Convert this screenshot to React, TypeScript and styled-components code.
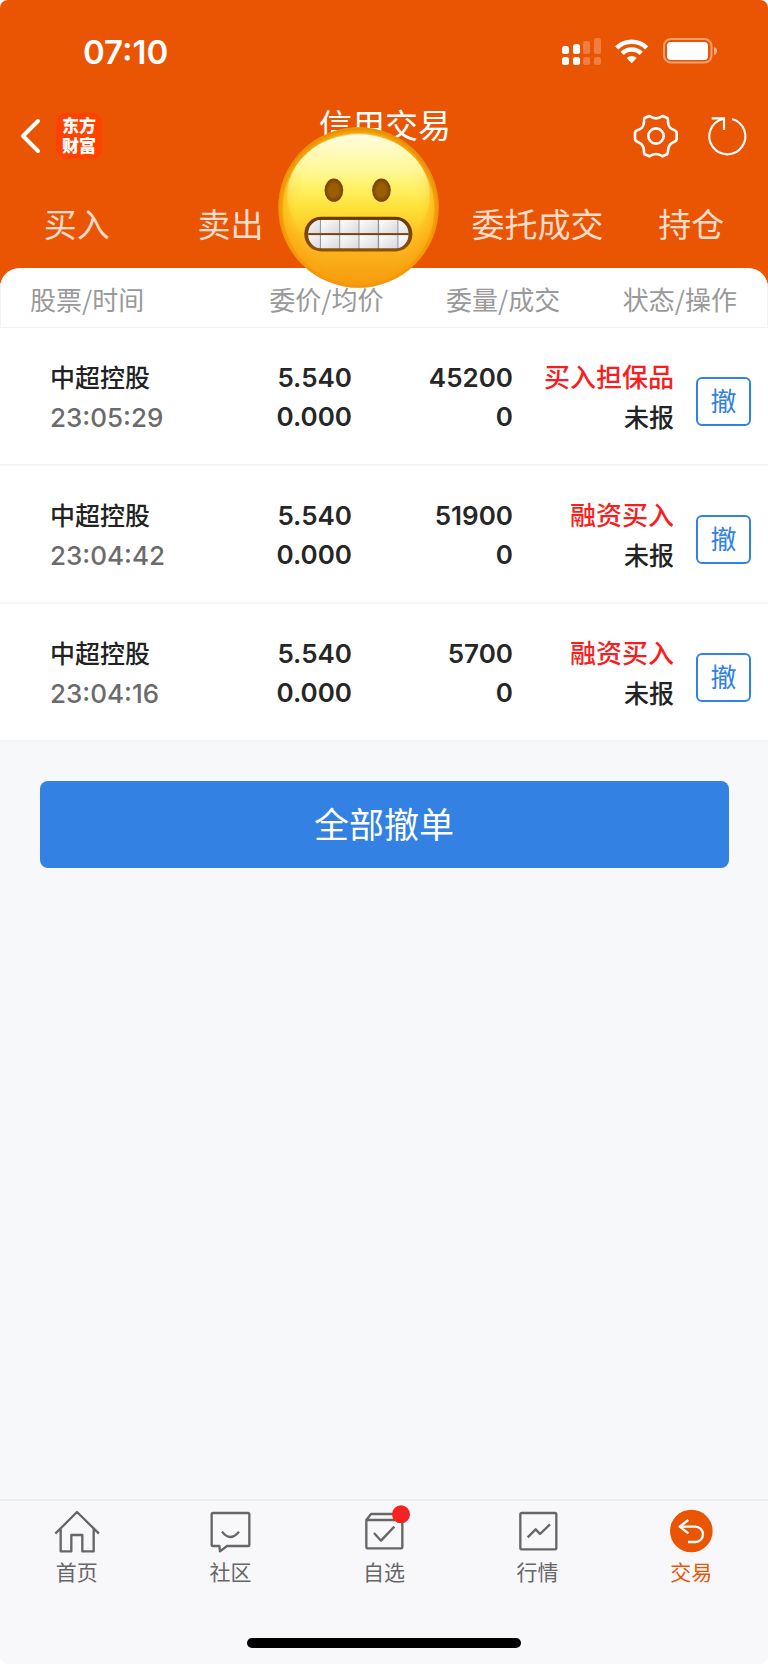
import React from 'react';
import styled, { createGlobalStyle } from 'styled-components';

const GlobalStyle = createGlobalStyle`
  *, *::before, *::after { box-sizing: border-box; }
  body {
    margin: 0;
    background: #fff;
    font-family: Inter, "Noto Sans CJK SC", sans-serif;
    color: #222;
  }
  button { font-family: inherit; padding: 0; cursor: pointer; }
  a { color: inherit; text-decoration: none; }
`;

const Screen = styled.div`
  position: relative;
  display: flex;
  flex-direction: column;
  min-height: 100vh;
  border-radius: 8px;
  overflow: hidden;
  background: #f7f8fa;
`;

const Top = styled.header`
  background: #ea5504;
  color: #fff;
  padding-bottom: 20px;
  margin-bottom: -20px;
`;

const StatusBar = styled.div`
  display: flex;
  align-items: center;
  justify-content: space-between;
  height: 102px;
  padding: 0 50px 0 83px;
`;

const Clock = styled.time`
  padding-top: 2px;
  font-size: 33px;
  font-weight: 600;
  line-height: 40px;
`;

const TitleBar = styled.div`
  display: grid;
  grid-template-columns: 1fr auto 1fr;
  align-items: center;
  height: 68px;
  padding: 0 16px 0 18px;
`;

const TitleSide = styled.div<{ $end?: boolean }>`
  display: flex;
  align-items: center;
  justify-content: ${(p) => (p.$end ? 'flex-end' : 'flex-start')};
  gap: ${(p) => (p.$end ? '24px' : '12px')};
`;

const Title = styled.h1`
  margin: 0;
  align-self: start;
  font-size: 33px;
  font-weight: 400;
  line-height: 48px;
`;

const IconButton = styled.button`
  display: flex;
  border: 0;
  background: none;
  color: inherit;
`;

const Logo = styled.span`
  width: 46px;
  height: 46px;
  padding: 3px 0;
  border-radius: 9px;
  background: #ff4200;
  text-align: center;
  font-size: 17px;
  font-weight: 900;
  line-height: 20px;
`;

const Tabs = styled.nav`
  display: grid;
  grid-template-columns: repeat(5, 1fr);
  height: 98px;
`;

const Tab = styled.a`
  padding-top: 35px;
  text-align: center;
  white-space: nowrap;
  font-size: 33px;
  line-height: 40px;
  color: #ffdccb;
`;

const Orders = styled.table`
  display: block;
  background: #fff;
  border-radius: 20px 20px 0 0;
`;

const HeadRow = styled.tr`
  display: grid;
  grid-template-columns: repeat(4, 1fr);
  height: 60px;
  padding: 4px 30px 0 29px;
  border: 1px solid #f2f2f4;
  border-top: 0;
  border-radius: 20px 20px 0 0;
`;

const HeadCell = styled.th<{ $start?: boolean }>`
  padding: 0;
  text-align: ${(p) => (p.$start ? 'left' : 'right')};
  font-family: "Noto Sans CJK SC", sans-serif;
  font-size: 26px;
  font-weight: 400;
  line-height: 54px;
  color: #999;
`;

const Block = styled.thead`
  display: block;
`;

const OrderRow = styled.tr`
  display: grid;
  grid-template-columns: 141fr 161fr 161fr 161fr 77fr;
  height: 138px;
  padding: 30px 17px 0 50px;
  border-bottom: 2px solid #f5f5f7;
`;

const Cell = styled.td<{ $start?: boolean }>`
  display: flex;
  flex-direction: column;
  align-items: ${(p) => (p.$start ? 'flex-start' : 'flex-end')};
  padding: 0;
  white-space: nowrap;
`;

const Line = styled.span<{ $tone?: 'muted' | 'red'; $name?: boolean }>`
  font-size: ${(p) => (p.$name ? '25px' : '26px')};
  font-weight: ${(p) => (p.$tone === 'muted' ? 500 : 600)};
  line-height: 39px;
  color: ${(p) => (p.$tone === 'muted' ? '#6b6b6b' : '#262626')};
`;

const Word = styled(Line)`
  font-weight: 500;
  line-height: 40px;
  color: ${(p) => (p.$tone === 'red' ? '#f91d1d' : '#222')};
`;

const CancelButton = styled.button`
  width: 55px;
  height: 49px;
  margin-top: 19px;
  border: 2px solid #3182e6;
  border-radius: 6px;
  background: #fff;
  color: #2f7fe4;
  font-size: 26px;
  line-height: 44px;
`;

const Main = styled.main`
  flex: 1;
`;

const CancelAll = styled.button`
  display: block;
  width: calc(100% - 79px);
  height: 87px;
  margin: 39px auto 0;
  border: 0;
  border-radius: 8px;
  background: #3281e3;
  color: #fff;
  font-size: 35px;
  line-height: 86px;
`;

const Footer = styled.footer`
  border-top: 2px solid #ebecee;
  background: #f8f8fb;
  padding-bottom: 16px;
`;

const NavBar = styled.nav`
  display: grid;
  grid-template-columns: repeat(5, 1fr);
  padding-top: 7px;
`;

const NavItem = styled.a<{ $active?: boolean }>`
  display: flex;
  flex-direction: column;
  align-items: center;
  font-size: 21px;
  line-height: 34px;
  color: ${(p) => (p.$active ? '#ea5504' : '#666')};
`;

const HomeIndicator = styled.div`
  width: 274px;
  height: 10px;
  margin: 48px auto 0;
  border-radius: 5px;
  background: #000;
`;

const Sticker = styled.svg`
  position: absolute;
  top: 127px;
  left: calc(50% - 106px);
  width: 161px;
  height: 161px;
`;

const NavSvg = styled.svg`
  width: 48px;
  height: 48px;
  overflow: visible;
  fill: none;
  stroke: currentColor;
  stroke-width: 7;
  stroke-linejoin: round;
`;

const BarSvg = styled.svg`
  width: 48px;
  height: 48px;
  fill: none;
  stroke: currentColor;
`;

const StatusIcons = () => (
  <svg width="156" height="30" viewBox="0 0 156 30" fill="#fff" aria-hidden="true">
    <rect x="0" y="10" width="7" height="8" rx="2.5" />
    <rect x="0" y="21" width="7" height="8" rx="2.5" />
    <rect x="11" y="8" width="7" height="10" rx="2.5" />
    <rect x="11" y="21" width="7" height="8" rx="2.5" />
    <g opacity=".24">
      <rect x="21" y="5" width="7" height="13" rx="2.5" />
      <rect x="21" y="21" width="7" height="8" rx="2.5" />
      <rect x="32" y="2" width="7" height="16" rx="2.5" />
      <rect x="32" y="21" width="7" height="8" rx="2.5" />
    </g>
    <g fill="none" stroke="#fff" strokeWidth="4.6">
      <path d="M54.7 11.8a21.5 21.5 0 0 1 30 0" />
      <path d="M60.2 17.4a13.6 13.6 0 0 1 19 0" />
    </g>
    <path d="M69.7 27.2l-5-5.2a7.4 7.4 0 0 1 10 0z" />
    <rect x="102" y="3" width="47.5" height="23.5" rx="7" fill="none" stroke="#fff" strokeWidth="2" opacity=".45" />
    <rect x="105" y="6" width="41" height="18" rx="4" />
    <path d="M152 11q3 1 3 4t-3 4z" opacity=".55" />
  </svg>
);

const Grimace = () => (
  <Sticker viewBox="55 80 482 484" role="img" aria-label="grimacing face">
    <defs>
      <linearGradient id="face" x1="0" y1="0" x2="0" y2="1">
        <stop offset="0" stopColor="#fff79a" />
        <stop offset=".3" stopColor="#fff45c" />
        <stop offset=".5" stopColor="#fee034" />
        <stop offset=".72" stopColor="#fdbb22" />
        <stop offset="1" stopColor="#f79d10" />
      </linearGradient>
      <radialGradient id="rim" cx=".5" cy=".52" r=".51">
        <stop offset=".76" stopColor="#fba60c" stopOpacity="0" />
        <stop offset=".93" stopColor="#f99c08" stopOpacity=".5" />
        <stop offset="1" stopColor="#dc7a05" stopOpacity=".7" />
      </radialGradient>
      <linearGradient id="edge" x1="0" y1="0" x2="0" y2="1">
        <stop offset="0" stopColor="#ffc50c" />
        <stop offset=".5" stopColor="#faa40e" />
        <stop offset="1" stopColor="#ee920c" />
      </linearGradient>
      <linearGradient id="gloss" x1="0" y1="0" x2="0" y2="1">
        <stop offset="0" stopColor="#fffde0" />
        <stop offset=".3" stopColor="#fffa9c" stopOpacity=".9" />
        <stop offset=".6" stopColor="#ffee48" stopOpacity=".35" />
        <stop offset=".9" stopColor="#ffd020" stopOpacity="0" />
      </linearGradient>
      <linearGradient id="tooth" x1="0" y1="0" x2="1" y2="1">
        <stop offset="0" stopColor="#fff" />
        <stop offset="1" stopColor="#d8d8de" />
      </linearGradient>
      <linearGradient id="lip" x1="0" y1="0" x2="0" y2="1">
        <stop offset="0" stopColor="#6d3602" />
        <stop offset="1" stopColor="#8f5206" />
      </linearGradient>
      <radialGradient id="eye">
        <stop offset=".5" stopColor="#9a5e04" />
        <stop offset="1" stopColor="#784004" />
      </radialGradient>
      <clipPath id="mouth">
        <rect x="145" y="359" width="301" height="86" rx="40" />
      </clipPath>
    </defs>
    <circle cx="296" cy="322" r="241" fill="url(#edge)" />
    <circle cx="296" cy="326" r="228" fill="url(#face)" opacity=".9" />
    <circle cx="296" cy="322" r="241" fill="url(#rim)" />
    <ellipse cx="296" cy="285" rx="214" ry="183" fill="url(#gloss)" />
    <ellipse cx="222" cy="270" rx="28" ry="35" fill="url(#eye)" />
    <ellipse cx="365" cy="270" rx="28" ry="35" fill="url(#eye)" />
    <rect x="133" y="350" width="325" height="104" rx="51" fill="url(#lip)" />
    <g clipPath="url(#mouth)">
      <rect x="145" y="359" width="301" height="86" fill="#87929b" />
      {[125, 183, 241, 299, 358, 416].map((x) => (
        <React.Fragment key={x}>
          <rect x={x} y="359" width="55" height="41" fill="url(#tooth)" />
          <rect x={x} y="404" width="55" height="41" fill="url(#tooth)" />
        </React.Fragment>
      ))}
      <rect x="145" y="399" width="301" height="6" fill="#7a450a" />
    </g>
  </Sticker>
);

const orders = [
  { name: '中超控股', time: '23:05:29', price: '5.540', avg: '0.000', qty: '45200', filled: '0', kind: '买入担保品', state: '未报' },
  { name: '中超控股', time: '23:04:42', price: '5.540', avg: '0.000', qty: '51900', filled: '0', kind: '融资买入', state: '未报' },
  { name: '中超控股', time: '23:04:16', price: '5.540', avg: '0.000', qty: '5700', filled: '0', kind: '融资买入', state: '未报' },
];

const navItems = [
  {
    label: '首页',
    icon: (
      <path d="M7 77 72 12l66 65M23 64v66h32V81h33v49h34V64" />
    ),
  },
  {
    label: '社区',
    icon: (
      <>
        <path d="M21 15h105q4 0 4 4v91q0 4-4 4H63l-21 16-2-16H21q-4 0-4-4V19q0-4 4-4z" />
        <path d="M48 71q24 32 51 0" />
      </>
    ),
  },
  {
    label: '自选',
    icon: (
      <>
        <path d="M19 36 33 18h80l14 18v81q0 4-4 4H23q-4 0-4-4zh108" />
        <path d="m42 75 21 23 40-42" />
        <circle cx="123" cy="19" r="27" fill="#f52222" stroke="none" />
      </>
    ),
  },
  {
    label: '行情',
    icon: (
      <>
        <rect x="19" y="15" width="108" height="109" rx="4" />
        <path d="m41 88 24-24 13 14 30-29" />
      </>
    ),
  },
  {
    label: '交易',
    active: true,
    icon: (
      <>
        <circle cx="73" cy="69" r="64" fill="#ea5504" stroke="none" />
        <path stroke="#fff" d="M64 36 38 56l26 20M38 56h47a23 23 0 0 1 0 46H63" />
      </>
    ),
  },
];

export default function App() {
  return (
    <>
      <GlobalStyle />
      <Screen>
        <Top>
          <StatusBar>
            <Clock>07:10</Clock>
            <StatusIcons />
          </StatusBar>
          <TitleBar>
            <TitleSide>
              <IconButton aria-label="返回">
                <svg width="26" height="40" viewBox="0 0 26 40" fill="none" stroke="#fff" strokeWidth="4" strokeLinecap="round" strokeLinejoin="round">
                  <path d="M20 5 5 20l15 15" />
                </svg>
              </IconButton>
              <Logo>东方<br />财富</Logo>
            </TitleSide>
            <Title>信用交易</Title>
            <TitleSide $end>
              <IconButton aria-label="设置">
                <BarSvg viewBox="10 12 144 144" strokeWidth="8" strokeLinejoin="round">
                  <path d="M62 24Q72 31 82 31T102 24L116 30Q119 34 118 42C118 54 127 64 138 67Q144 70 144 74V94Q143 99 137 101C126 105 118 115 118 128Q118 135 115 139L102 145Q92 138 82 138T62 145L48 139Q45 135 46 128C46 115 37 105 26 101Q20 99 19 94V74Q20 69 26 67C37 64 46 54 46 42Q45 34 48 30Z" />
                  <circle cx="82" cy="84" r="23" />
                </BarSvg>
              </IconButton>
              <IconButton aria-label="刷新">
                <BarSvg viewBox="225 12 144 144" strokeWidth="6.5">
                  <path d="M309 33A54 54 0 1 1 281 33M248 31h37v35" />
                </BarSvg>
              </IconButton>
            </TitleSide>
          </TitleBar>
          <Tabs>
            <Tab href="#buy">买入</Tab>
            <Tab href="#sell">卖出</Tab>
            <Tab href="#cancel" aria-current="page" aria-label="撤单" />
            <Tab href="#orders">委托成交</Tab>
            <Tab href="#positions">持仓</Tab>
          </Tabs>
        </Top>
        <Main>
          <Orders>
            <Block>
              <HeadRow>
                <HeadCell $start>股票/时间</HeadCell>
                <HeadCell>委价/均价</HeadCell>
                <HeadCell>委量/成交</HeadCell>
                <HeadCell>状态/操作</HeadCell>
              </HeadRow>
            </Block>
            <Block as="tbody">
              {orders.map((o) => (
                <OrderRow key={o.time}>
                  <Cell $start>
                    <Word $name>{o.name}</Word>
                    <Line $tone="muted">{o.time}</Line>
                  </Cell>
                  <Cell>
                    <Line>{o.price}</Line>
                    <Line>{o.avg}</Line>
                  </Cell>
                  <Cell>
                    <Line>{o.qty}</Line>
                    <Line>{o.filled}</Line>
                  </Cell>
                  <Cell>
                    <Word $tone="red">{o.kind}</Word>
                    <Word $name>{o.state}</Word>
                  </Cell>
                  <Cell>
                    <CancelButton>撤</CancelButton>
                  </Cell>
                </OrderRow>
              ))}
            </Block>
          </Orders>
          <CancelAll>全部撤单</CancelAll>
        </Main>
        <Footer>
          <NavBar>
            {navItems.map((n) => (
              <NavItem key={n.label} href={`#${n.label}`} $active={n.active}>
                <NavSvg viewBox="0 0 144 144" aria-hidden="true">{n.icon}</NavSvg>
                {n.label}
              </NavItem>
            ))}
          </NavBar>
          <HomeIndicator />
        </Footer>
        <Grimace />
      </Screen>
    </>
  );
}
